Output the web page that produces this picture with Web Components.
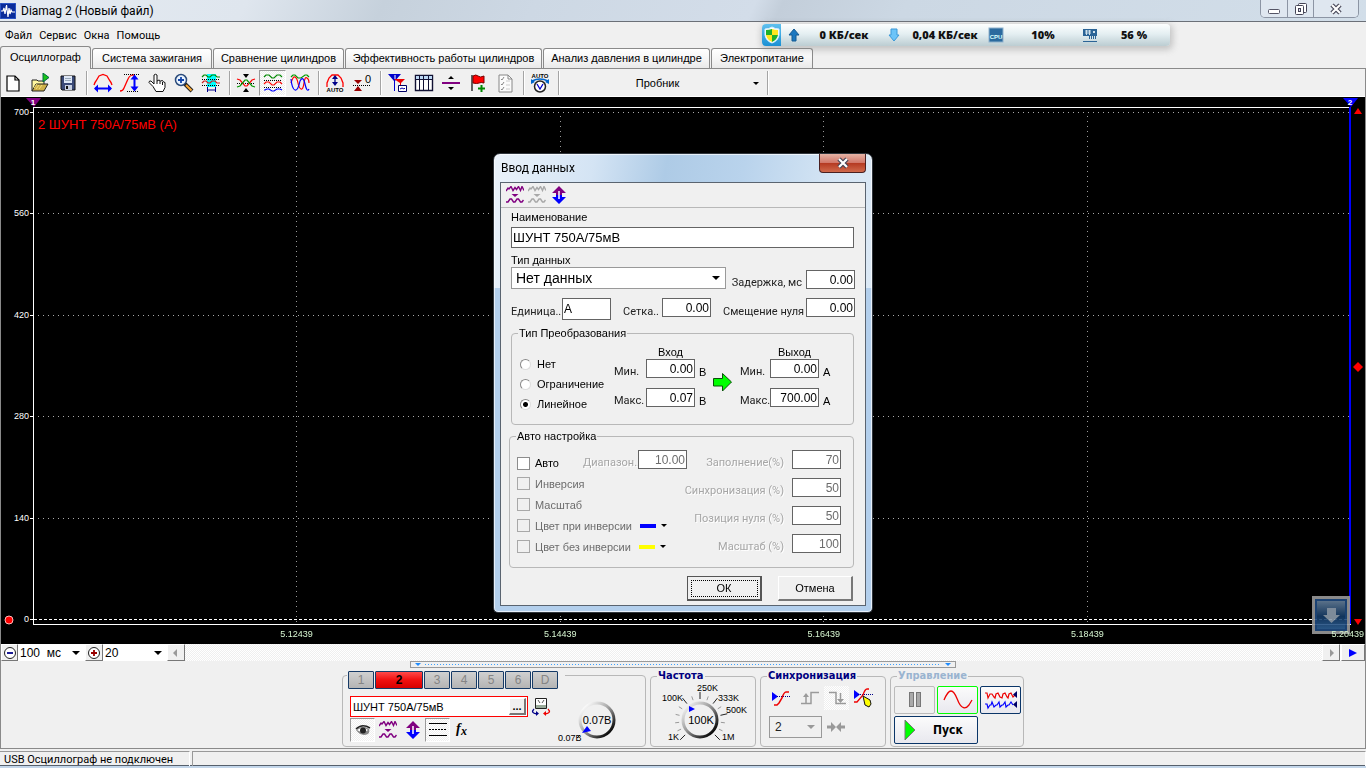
<!DOCTYPE html>
<html lang="ru">
<head>
<meta charset="utf-8">
<title>Diamag 2 (Новый файл)</title>
<style>
:root{--ms:"Liberation Sans",Arial,sans-serif;--tahoma:Roboto,"DejaVu Sans Condensed",sans-serif;--tahoma-bold:"DejaVu Sans Condensed","DejaVu Sans",sans-serif;--segoe:Roboto,"Noto Sans",sans-serif;--segoe-bold:"Noto Sans","Open Sans",sans-serif;--face:#f0f0f0;--line:#b8b8b8;--dark:#646464}
body{margin:0;font:11px/14px var(--ms);color:#000;background:#f0f0f0}
</style>
</head>
<body>
<diamag-app></diamag-app>
<script>
const define = (name, css, html) => customElements.define(name, class extends HTMLElement {
  constructor() { super(); this.attachShadow({ mode: "open" }); }
  connectedCallback() {
    if (this.shadowRoot.childNodes.length) return;
    const t = document.createElement("template");
    t.innerHTML = `<style>*{box-sizing:border-box}[hidden]{display:none}${css}</style>${typeof html === "function" ? html(this) : html}`;
    this.shadowRoot.append(t.content.cloneNode(true));
  }
});

/* ---------- icons ---------- */
const P = (d, stroke, w = 1, extra = "") => `<path d="${d}" fill="none" stroke="${stroke}" stroke-width="${w}" ${extra}/>`;
const F = (d, fill, extra = "") => `<path d="${d}" fill="${fill}" ${extra}/>`;
const dots = 'stroke-dasharray="1 1" shape-rendering="crispEdges"';
const zig = c => P("M1 6l2 -3l1 1l2 -2.500l2 4l2 -3l1.500 2l2 -3l2 4l1.500 -4l2 4", c, 1.4);
const smooth = c => P("M1 17h2l2 -3h1.500l2 3h1.500l2 -3h1.500l2 3h1.500l1.500 -2", c, 1.4);
const waves2 = c => zig(c) + F("M6.500 9h7l-3.500 3z", c) + smooth(c);
const ICONS = {
  app: [16, 16, `<rect width="16" height="16" rx="1" fill="#0a2c9a"/><rect x=".5" y=".5" width="15" height="15" rx="1" fill="none" stroke="#2a55c8"/>` + P("M1 8h2l1 -3l1 6l1.500 -9l1.500 12l1 -9l1 6l1 -4l1 2h3", "#fff", 1.200)],
  new: [20, 20, F("M3 3h8l4 4v11h-12z", "#fff", 'stroke="#000" stroke-width="1.2"') + P("M11 3v4h4", "#000", 1.200)],
  open: [20, 20, F("M1 18v-11h5l1 1h6v3", "#fff7a0", 'stroke="#222"') + F("M1 18l4 -7h12l-4 7z", "#cfb14a", 'stroke="#222"') + F("M12 0l6 4.500l-6 4.500z", "#18c418", 'stroke="#064"') + P("M3 15l3 -4M5 16l3 -4M8 16l3 -4", "#f4e27a")],
  save: [20, 20, F("M3 3h14v14h-13l-1 -1z", "#3a4a78", 'stroke="#111"') + F("M6 3h8v7h-8z", "#dfe8f6") + F("M7 12h7v5h-7z", "#c8d0e0") + F("M8 13h2v3h-2z", "#111") + P("M7 5.500h6M7 7.500h6", "#9ab")],
  archh: [20, 20, P("M1 12q1 -3 2 -4l3 -5l4 -1.500l4 1.500l3 5q1 1 2 4", "red", 1.300) + P("M2 15.500h16", "#00f", 2) + F("M1 15.500l4 -4v8zM19 15.500l-4 -4v8z", "#00f")],
  archv: [20, 20, P("M0 18q3 0 4 -3l4 -9q1 -3 4 -4h2", "red", 1.300) + P("M4 1.500h16M7 18.500h12", "#000", 1, dots) + P("M14.500 4v12", "#00f", 2) + F("M14.500 1.500l4 5h-8zM14.500 18.500l4 -5h-8z", "#00f")],
  hand: [20, 20, F("M7 11v-9q1.500 -1.500 3 0v6l2 -1l1.500 1l2 -.5l1 1.500l1.500 .5v5l-2 4h-7l-3 -5l-4 -4q0 -2 2 -1.500z", "#fff", 'stroke="#111"') + P("M10 8v3M13 8v3M15.500 9v3", "#111")],
  zoom: [20, 20, `<circle cx="7" cy="7" r="5.500" fill="#eaf4ff" stroke="#2a4a7a" stroke-width="1.500"/>` + P("M7 4v6M4 7h6", "#14a", 1.800) + P("M11 11l7 7", "#222", 4) + P("M12 12l5.500 5.500", "#fa3", 2)],
  fit: [20, 20, F("M6 1h9v13h-9z", "#0ff") + P("M1 4l2 -2h2l2 2h2l2 -2h3l2 2h3", "#080", 1.200) + P("M1 10l2 -2h2l2 2h2l2 -2h3l2 2h3", "#c22", 1.200) + P("M1 6.500h18M1 12.500h18", "#000", 1, dots) + P("M6 17h9M6.500 14v5M14.500 14v5", "#008")],
  center: [20, 20, F("M7 1h6l-3 4zM7 19h6l-3 -4z", "#000") + P("M1 10.500h18", "#000", 1, dots) + P("M1 6l3 1l5 6h2l5 -6l3 -1", "red", 1.200) + P("M1 14l3 -1l5 -6h2l5 6l3 1", "#090", 1.200)],
  split3: [20, 20, P("M1 4l2 -2h3l3 3h2l3 -3h3l2 2", "#080", 1.200) + P("M1 11l2 -2h3l3 3h2l3 -3h3l2 2", "red", 1.200) + P("M1 17h1l2 -1h2l3 2h2l3 -2h3l2 1", "#00f", 1.200) + P("M1 7.500h18M1 14.500h18", "#000", 1, dots)],
  overlap: [20, 20, P("M1 4l2 -2h2l3 3h3l4 -3h2l2 2", "#090", 1.200) + P("M1 10q2 -7 4 -6t3 6t3 6q2 1 3 -6t3 -5q2 1 2 5", "red", 1.200) + P("M1 6q1 10 4 11t5 -9q3 -6 5 3t4 5", "#00f", 1.200)],
  autoarch: [20, 20, P("M2 14v-4l2 -5l3 -3h6l3 3l2 5v4", "red", 1.300) + P("M10 5v6", "#008", 1.300) + F("M10 2l3 4h-6zM10 13l3 -4h-6z", "#008") + `<text x="10" y="19" font-size="6" font-weight="700" text-anchor="middle" fill="#000">AUTO</text>`],
  zero: [20, 20, F("M2 7h8l-4 4zM2 18h8l-4 -5z", "#900") + P("M1 12.500h18", "#000", 1, dots) + `<text x="16" y="10" font-size="11" text-anchor="middle" fill="#000">0</text>`],
  trig: [20, 20, F("M1 1h13l-6 7v10h-1v-10z", "#00c") + F("M7 6h11l-4 4v7h-1v-7z", "#e00") + F("M11.500 12.500h8v6h-8z", "#fff", 'stroke="#006"') + P("M13 16l2 -1l2 1l1 -1", "#00a") + P("M8 2v4", "#fff")],
  table: [20, 20, F("M1.500 2.500h17v15h-17z", "#fff", 'stroke="#113" stroke-width="1.400"') + F("M2 3h16v3h-16z", "#bcd8f4") + P("M1 6.500h18M5.500 3v14M9.500 3v14M14.500 3v14", "#113")],
  hsplit: [20, 20, F("M7 6h6l-3 -3zM7 14h6l-3 3z", "#000") + F("M1 9h18v2h-18z", "#800080")],
  flag: [20, 20, P("M4 2v16", "#111", 1.300) + F("M5 3q3 -2 5 0t6 0v7q-3 -1 -5 0t-6 0z", "#f00", 'stroke="#700"') + P("M13.500 12v7M10 15.500h7", "#080", 2)],
  check: [20, 20, F("M4 2h9l4 4v13h-13z", "#fbfbfb", 'stroke="#888"') + P("M13 2v4h4M6 6l1 1l2 -3M6 11l1 1l2 -3M6 16l1 1l2 -3", "#888") + P("M11 8h4M11 12h4M11 16h4", "#ccc")],
  autov: [22, 22, `<text x="11" y="6" font-size="6" font-weight="700" text-anchor="middle" fill="#000">AUTO</text>` + P("M3 9q8 -4 16 0", "#06c", 1.600) + F("M2 7v5l4 -2zM20 7v5l-4 -2z", "#06c") + `<circle cx="11" cy="14.500" r="5.500" fill="#fff" stroke="#222" stroke-width="1.500"/>` + P("M8 12l3 5l3 -5", "#00c", 1.300)],
  waves: [18, 18, `<g transform="translate(-1 -1)">${waves2("#800080")}</g>`],
  wavesgray: [18, 18, `<g transform="translate(-1 -1)">${waves2("#a8a8a8")}</g>`],
  updown: [16, 18, F("M8 0l7 7h-4v2h-6v-2h-4z", "#800080") + F("M8 18l7 -7h-4v-2h-6v2h-4z", "#00f") + P("M8 5v8", "#fff", 1.500)],
  arrow: [22, 22, F("M1.500 7.500h9v-5l9 8.500l-9 9v-5h-9z", "#0f0", 'stroke="#0a500a"')],
  eye: [16, 12, F("M1 6q6 -6 13 -1q1 3 -1 5q-7 3 -12 -4z", "#888") + F("M2 6q6 -4 11 0q-5 4 -11 0z", "#fff") + `<circle cx="8" cy="6.500" r="3" fill="#222"/>` + P("M1 5q6 -6 14 -1", "#222", 1.600)],
  lines: [18, 16, P("M0 1.500h18M0 13.500h18", "#000") + P("M0 7.500h18", "#000", 1, 'stroke-dasharray="2 1"')],
  fx: [16, 16, `<text x="1" y="11" font-family="Liberation Serif" font-style="italic" font-weight="700" font-size="14">f</text><text x="6" y="13" font-family="Liberation Serif" font-style="italic" font-weight="700" font-size="12">x</text>`],
  device: [20, 20, F("M4.500 1.500h11v10h-11z", "#fff", 'stroke="#222"') + F("M5 8h10v3h-10z", "#9a9") + P("M7 3l2 3M13 3l-2 3", "#555") + P("M3 12q-4 4 3 5", "#008", 1.300) + P("M17 12q4 4 -3 5", "#e00", 1.300) + F("M5 14v5l3 -2.500z", "#008") + F("M15 14v5l-3 -2.500z", "#e00")],
  sync: [20, 18, F("M1 3v9l6 -4.500z", "#00f") + P("M6 7.500h13", "#008", 1, dots) + P("M3 16h3l2 -2l3 -5q2 -6 4 -6h3", "#e00", 1.500)],
  rise: [20, 18, P("M1 14.500h10v-11h8", "#9a9a9a", 1.500) + P("M6 7v7", "#9a9a9a", 1.500) + F("M3 8l3 -4l3 4z", "#9a9a9a")],
  fall: [20, 18, P("M2 3.500h7v11h10", "#9a9a9a", 1.500) + P("M13.500 4v8", "#9a9a9a", 1.500) + F("M10 10h7l-3.500 4z", "#9a9a9a")],
  syncpick: [22, 22, F("M1 3v9l6 -4.500z", "#00f") + P("M5 7.500h15", "#008", 1, dots) + P("M1 15h3l6 -7q2 -6 4 -6h2", "#e00", 1.300) + F("M10 9l7 4l1 4l-2 3l-4 -2z", "#ff0", 'stroke="#111"')],
  meet: [20, 14, P("M1 7h5M19 7h-5", "#999", 3) + F("M5 2l5 5l-5 5zM15 2l-5 5l5 5z", "#999")],
  pause: [14, 18, `<rect x="1.500" y="1.500" width="4" height="14" fill="#aaa" stroke="#777"/><rect x="8.500" y="1.500" width="4" height="14" fill="#aaa" stroke="#777"/>`],
  sine: [30, 20, P("M1 10C4 3 6 1 8 1C12 1 14 9 16 13C19 19 23 19 26 15L29 10", "#e00", 1.300)],
  twin: [34, 20, P("M1 3h2l1 5l2 -4h2l2 3l1 1l1 -4l2 -1l2 4l2 1l1 -4l2 -1l2 4l1 1l1 -4l2 -1l2 4l3 -3", "#e00", 1.200) + P("M1 14h2l1 4l2 -3h1l1 -3l2 5l2 -2h1l2 -3l1 5l2 -2h1l2 -3l1 5l2 -2h1l2 -3l2 3", "#00f", 1.200) + F("M33 1v7l-4 -3.500zM33 11v7l-4 -3.500z", "#006")],
  play: [12, 20, F("M1 0l10 10l-10 10z", "#0f0", 'stroke="#777"')],
  minus: [14, 14, `<circle cx="7" cy="7" r="5.500" fill="#fff" stroke="#222"/>` + P("M4 7h6", "#008", 1.800)],
  plus: [14, 14, `<circle cx="7" cy="7" r="5.500" fill="#fff" stroke="#222"/>` + P("M4 7h6M7 4v6", "#900", 1.800)],
  left: [14, 14, F("M8 3v8l-4 -4z", "#999")],
  right: [14, 14, F("M6 3v8l4 -4z", "#999")],
  go: [14, 14, F("M3 3v8l8 -4z", "#00f")],
  shield: [16, 18, F("M8 1q3 2 7 2v6q-1 6 -7 8q-6 -2 -7 -8v-6q4 0 7 -2z", "#fff", 'stroke="#d8f0ff"') + F("M8 3v6h-6v-5q3 0 6 -1zM8 9h6q-1 5 -6 7z", "#1fb02c") + F("M8 3v6h6v-5q-3 0 -6 -1zM8 9h-6q1 5 6 7z", "#ffe61e")],
  up: [12, 14, F("M6 1l5 6h-3v6h-4v-6h-3z", "#1b78c0", 'stroke="#155a92"')],
  down: [12, 16, F("M6 14l5 -6h-2v-6h-6v6h-2z", "#6cc4f8", 'stroke="#3a98d8"')],
  cpu: [16, 16, `<rect x="1" y="1" width="14" height="14" fill="#2b6a9e" stroke="#8fb2cc"/>` + `<text x="8" y="12" font-size="6" font-weight="700" text-anchor="middle" fill="#dff">CPU</text>`],
  ram: [16, 16, F("M1 2h14v7h-14z", "#2b6496") + P("M3 4h6M3 6h6M4.500 3v5M7.500 3v5", "#cfe0ea") + F("M11 4h2v2h-2z", "#cfe0ea") + P("M7.500 9v3M9.500 9v3M11.500 9v3M13.500 9v3M1 14.500h14", "#2b6496")],
  min: [14, 14, `<rect x="1.500" y="7.500" width="11" height="4" rx="1" fill="#fff" stroke="#556"/>`],
  restore: [14, 14, `<rect x="4.500" y="1.500" width="8" height="9" rx="1" fill="#fff" stroke="#445"/><rect x="1.500" y="3.500" width="8" height="9" rx="1" fill="#fff" stroke="#445"/><rect x="4.500" y="6.500" width="2" height="3" fill="#dde" stroke="#445"/>`],
  close: [14, 12, P("M3 2l8 8M11 2l-8 8", "#445", 4.500) + P("M3 2l8 8M11 2l-8 8", "#fff", 2.200)],
};
define("ui-icon", ":host{display:inline-flex;flex:none;font-family:var(--ms)}svg{display:block}", el => {
  const [w, h, body] = ICONS[el.getAttribute("name")];
  return `<svg width="${w}" height="${h}" viewBox="0 0 ${w} ${h}" aria-hidden="true">${body}</svg>`;
});

/* ---------- title bar, menu ---------- */
define("title-bar", `
:host{display:flex;height:22px;flex:none;align-items:center;border-bottom:1px solid #6b7078;padding:0 7px 0 0;background:linear-gradient(115deg,#e4eaf1 0,#dfe6ee 18%,#c6d1dc 28%,#cdd8e4 39%,#d3dde9 55%,#c3ceda 57%,#ccd8e4 66%,#d2dee9 100%)}
h1{flex:1;margin:0 0 0 5px;font:12px/20px var(--segoe)}
.c{display:flex;align-self:flex-start;height:18px;border:1px solid #8c95a4;border-top:0;border-radius:0 0 5px 5px;overflow:hidden}
button{border:0;border-left:1px solid #8c95a4;background:#dfe7f0;padding:0;width:26px;display:grid;place-items:center}
button:first-child{border-left:0}button:last-child{width:45px}`, `
<ui-icon name="app"></ui-icon><h1>Diamag 2 (Новый файл)</h1>
<div class="c"><button aria-label="Свернуть"><ui-icon name="min"></ui-icon></button><button aria-label="Восстановить"><ui-icon name="restore"></ui-icon></button><button aria-label="Закрыть"><ui-icon name="close"></ui-icon></button></div>`);

define("menu-bar", `
:host{display:flex;height:25px;flex:none;align-items:center;padding:2px 5px 0;gap:7px;background:var(--face)}
a{color:#000;text-decoration:none;font:11px/16px var(--segoe)}`, `
<a href="#file">Файл</a><a href="#service">Сервис</a><a href="#windows">Окна</a><a href="#help">Помощь</a>`);

define("net-monitor", `
:host{position:absolute;top:24px;right:196px;width:408px;height:22px;display:flex;align-items:center;border-radius:4px;background:linear-gradient(#fdfefe,#e4eff2 45%,#bccdd2);box-shadow:1px 2px 6px 2px #8886;font:bold 11px/14px var(--segoe-bold);color:#111}
.s{width:19px;height:22px;display:grid;place-items:center;border-radius:4px 0 0 4px;background:linear-gradient(#5fc0ee,#1a90d4)}
.i{width:26px;display:grid;place-items:center}b{text-align:center}`, `
<span class="s"><ui-icon name="shield"></ui-icon></span><span class="i"><ui-icon name="up"></ui-icon></span><b style="width:74px">0 КБ/сек</b><span class="i"><ui-icon name="down"></ui-icon></span><b style="width:76px">0,04 КБ/сек</b><span class="i"><ui-icon name="cpu"></ui-icon></span><b style="width:68px">10%</b><span class="i"><ui-icon name="ram"></ui-icon></span><b style="width:62px">56 %</b>`);

/* ---------- tabs, toolbar ---------- */
define("mode-tabs", `
:host{display:flex;height:22px;flex:none;align-items:flex-end;gap:1px;border-bottom:1px solid #8a8a8a}
button{height:20px;padding:0 0 1px;border:1px solid #8a8a8a;border-bottom:0;border-radius:3px 3px 0 0;background:linear-gradient(#fff,#f4f4f4 60%,#e9e9e9);font:11px/14px var(--ms);color:#000;white-space:nowrap}
button[aria-selected=true]{height:23px;margin-bottom:-1px;background:var(--face);padding-bottom:3px}`, () =>
  [["Осциллограф", 91], ["Система зажигания", 120], ["Сравнение цилиндров", 131], ["Эффективность работы цилиндров", 197], ["Анализ давления в цилиндре", 167], ["Электропитание", 102]]
    .map(([t, w], i) => `<button role="tab" aria-selected="${!i}" style="width:${w}px">${t}</button>`).join(""));

define("tool-bar", `
:host{display:flex;height:28px;flex:none;align-items:center;background:var(--face);border-bottom:1px solid #fff}
button{width:27px;height:26px;border:0;padding:0;background:none;display:grid;place-items:center}
button:first-of-type{width:26px}
button.on{background:repeating-conic-gradient(#fff 0 25%,#ececec 0 50%) 0 0/2px 2px;border:1px solid #999;border-right-color:#fff;border-bottom-color:#fff}
i{width:8px;height:24px;background:linear-gradient(90deg,#a4a4a4 50%,#fff 50%) 5px 0/2px 100% no-repeat}
.d{width:201px;position:relative;display:flex;align-items:center}
select{appearance:none;width:100%;border:0;background:none;font:11px/14px var(--ms);color:#000;text-align:center;text-align-last:center;padding:0 8px 0 0}
.d::after{content:"";position:absolute;right:3px;top:6px;border:3px solid transparent;border-top-color:#000;border-bottom:0}`, () =>
  [["new open save"], ["archh archv hand zoom fit"], ["center split3 overlap"], ["autoarch zero"], ["trig table hsplit flag check"], ["autov"]]
    .map(([g]) => g.split(" ").map(n => `<button class="${n === "split3" ? "on" : ""}" aria-label="${n}"><ui-icon name="${n}"></ui-icon></button>`).join("") + "<i></i>").join("") +
  `<div class="d"><select aria-label="Датчик"><option>Пробник</option></select></div><i></i>`);

/* ---------- oscilloscope ---------- */
define("scope-view", `
:host{flex:1;min-height:0;display:grid;grid-template:10px 1fr 19px/32px 1fr 14px;background:#000;position:relative;color:#fff;font:9px/10px var(--ms);overflow:hidden}
.y{grid-area:2/1;padding:5px 0;display:flex;flex-direction:column;justify-content:space-between;align-items:flex-end}
.y span{height:1px;line-height:1px;display:flex;align-items:center;gap:1px}
.y span::after{content:"";width:3px;height:1px;background:#fff}
.p{grid-area:2/2;border:1px solid #fff;border-width:1px 0 1px 1px;position:relative;padding:4px 0;display:flex;flex-direction:column;justify-content:space-between}
.p hr{margin:0;border:0;width:100%;height:1px;background:repeating-linear-gradient(90deg,transparent 0 4px,#aaa 4px 5px)}
.p hr:last-of-type{background:repeating-linear-gradient(90deg,#fff 0 3px,transparent 3px 5px)}
.v{position:absolute;inset:4px 0 0;display:grid;grid-template-columns:repeat(5,1fr)}
.v i{background:repeating-linear-gradient(transparent 0 4px,#999 4px 5px) 100% 0/1px 100% no-repeat}
.v i:last-child{margin-top:-5px;background:linear-gradient(#00f,#00f) 100% 0/2px 100% no-repeat}
.n{position:absolute;left:4px;top:9px;color:#f00;font:13px/15px var(--ms)}
.x{grid-area:3/2;display:flex;justify-content:space-between;padding-top:4px;color:#d6f5d0;position:relative;z-index:1;pointer-events:none}
.x span{width:0;display:flex;justify-content:center}
.x .e{justify-content:flex-end}.e b{font-weight:400;margin-right:-13px}
svg{display:block}
.m1{grid-area:1/1/2/3;justify-self:start;margin-left:25px;align-self:end}.m2{grid-area:1/2/2/4;justify-self:end;margin-right:7px;align-self:end}
.r{grid-area:2/3;display:flex;flex-direction:column;justify-content:space-between;align-items:center}
.z{grid-area:2/1;align-self:end;margin-left:3px}
.g{position:absolute;right:15px;bottom:10px;width:38px;height:38px;border:3px solid #999;padding:0;background:linear-gradient(#6f879f,#143a66 55%,#33669b);outline:2px solid #1f4a80;outline-offset:-5px;display:grid;place-items:center;opacity:.9}`, `
<svg class="m1" width="15" height="9"><path d="M0 0h15l-7 9z" fill="#800080"/><text x="7" y="7" font-size="8" font-weight="700" text-anchor="middle" fill="#fff">1</text></svg>
<svg class="m2" width="15" height="9"><path d="M0 0h15l-7 9z" fill="#00f"/><text x="7" y="7" font-size="8" font-weight="700" text-anchor="middle" fill="#fff">2</text></svg>
<div class="y"><span>700</span><span>560</span><span>420</span><span>280</span><span>140</span><span>0</span></div>
<svg class="z" width="10" height="10"><circle cx="5" cy="5" r="4" fill="red" stroke="#fbb"/></svg>
<div class="p"><div class="v"><i></i><i></i><i></i><i></i><i></i></div><hr><hr><hr><hr><hr><hr><div class="n">2 ШУНТ 750А/75мВ (А)</div></div>
<div class="r"><svg width="8" height="8"><path d="M4 1l4 6h-8z" fill="red"/></svg><svg width="10" height="10"><path d="M5 0l5 5l-5 5l-5 -5z" fill="red"/></svg><svg width="8" height="7"><path d="M0 1h8l-4 6z" fill="red"/></svg></div>
<div class="x"><span></span><span>5.12439</span><span>5.14439</span><span>5.16439</span><span>5.18439</span><span class="e"><b>5.20439</b></span></div>
<button class="g" aria-label="Загрузка"><svg width="18" height="18"><path d="M5 2h9v7h4l-8.500 8l-8.500 -8h4z" fill="#8b9bab"/></svg></button>`);

define("time-bar", `
:host{display:flex;height:17px;flex:none;background:#fff}
button{width:18px;border:1px solid #fff;border-right-color:#777;border-bottom-color:#777;background:var(--face);padding:0;display:grid;place-items:center}
.s{position:relative;display:flex;background:#fff}
select{appearance:none;border:0;background:none;font:12px/16px var(--ms);color:#000;padding:0 2px;width:100%}
.s::after{content:"";position:absolute;right:5px;top:7px;border:4px solid transparent;border-top-color:#000;border-bottom:0}
.t{flex:1;background:repeating-conic-gradient(#fff 0 25%,#efefef 0 50%) 0 0/2px 2px}
.f{width:17px}.go{width:24px;margin-left:1px}`, `
<button class="f" aria-label="Сжать"><ui-icon name="minus"></ui-icon></button><div class="s" style="width:67px"><select aria-label="Развёртка"><option>100&nbsp; мс</option></select></div>
<button aria-label="Растянуть"><ui-icon name="plus"></ui-icon></button><div class="s" style="width:64px"><select aria-label="Кадры"><option>20</option></select></div>
<button aria-label="Влево"><ui-icon name="left"></ui-icon></button><div class="t"></div><button aria-label="Вправо"><ui-icon name="right"></ui-icon></button><button class="go" aria-label="Воспроизвести"><ui-icon name="go"></ui-icon></button>`);

define("split-grip", `
:host{display:flex;align-items:center;gap:4px;width:546px;height:7px;flex:none;align-self:center;border:1px solid #999;padding:0 4px;background:var(--face)}
i{border:3px solid transparent;border-top-color:#1e8cff;border-bottom:0}
b{flex:1;height:1px;background:repeating-linear-gradient(90deg,#3aa0ff 0 1px,transparent 1px 3px)}`, `<i></i><b></b><i></i>`);

/* ---------- group box ---------- */
define("group-box", `
:host{display:block}
fieldset{margin:0;padding:0;min-width:0;border:1px solid var(--line);border-radius:4px;height:100%}
legend{margin-left:6px;padding:0 1px;font:var(--lf,11px/10px var(--ms));color:var(--lc,#000)}`, el =>
  `<fieldset><legend>${el.getAttribute("label")}</legend><slot></slot></fieldset>`);

/* ---------- lower control panel ---------- */
define("channel-panel", `
:host{display:block;width:304px;height:72px;border:1px solid var(--line);border-radius:4px}
.t{display:flex;width:fit-content;gap:1px;margin:-5px 0 0 4px;padding:0 7px 0 1px;background:var(--face)}
.t button{width:26px;height:18px;padding:0;border:1px solid #163a66;border-radius:1px;background:linear-gradient(#d0d0d0,#b4b4b4);color:#858585;font:12px/14px var(--ms)}
.t .on{width:48px;background:linear-gradient(#ff4a4a,#f01010 50%,#d80000);color:#000;font-weight:700}
.b{display:flex;justify-content:space-between}
.l{padding:7px 0 0 7px}
.f{display:flex;align-items:center;gap:3px}
.in{display:flex;width:178px;height:21px;border:1px solid #f00;background:#fff;padding:1px}
input{flex:1;min-width:0;border:0;padding:0 1px;font:11px/16px var(--ms);background:none;color:#000}
.in button{width:17px;padding:0;border:1px solid #fff;border-right:2px solid #777;border-bottom:2px solid #777;background:var(--face);font:bold 11px/8px var(--ms)}
.i{display:flex;margin-top:1px}
.i button{width:25px;height:24px;padding:0;border:0;background:none;display:grid;place-items:center}
.i .on{border:1px solid #999;border-right-color:#fff;border-bottom-color:#fff;background:repeating-conic-gradient(#fff 0 25%,#efefef 0 50%) 0 0/2px 2px}
text{font-family:var(--ms)}`, `
<div class="t"><button>1</button><button class="on">2</button><button>3</button><button>4</button><button>5</button><button>6</button><button>D</button></div>
<div class="b"><div class="l">
<div class="f"><span class="in"><input aria-label="Канал" value="ШУНТ 750А/75мВ"><button aria-label="Изменить">...</button></span><ui-icon name="device"></ui-icon></div>
<div class="i"><button class="on" aria-label="Видимость"><ui-icon name="eye"></ui-icon></button><button aria-label="Сигнал"><ui-icon name="waves"></ui-icon></button><button aria-label="Сдвиг"><ui-icon name="updown"></ui-icon></button><button class="on" aria-label="Линии"><ui-icon name="lines"></ui-icon></button><button aria-label="Функция"><ui-icon name="fx"></ui-icon></button></div></div>
<svg width="91" height="56" viewBox="554 689 91 56" role="img" aria-label="Чувствительность"><defs><linearGradient id="k" x1="0" y1="0" x2="1" y2="1"><stop offset=".1" stop-color="#fff"/><stop offset=".45" stop-color="#aaa"/><stop offset=".9" stop-color="#000"/></linearGradient></defs>
<circle cx="597" cy="720" r="17" fill="#f0f0f0" stroke="url(#k)" stroke-width="3"/><path d="M582 733l5 -7l4 5z" fill="#00f"/><path d="M580 735l-3 3" stroke="#222"/><text x="597" y="724" font-size="11" text-anchor="middle">0.07В</text><text x="558" y="741" font-size="9">0.07В</text></svg></div>`);

define("frequency-panel", `
:host{display:block;width:106px}svg{display:block}text{font-family:var(--ms);font-size:9px}group-box{height:76px;--lf:bold 11px/10px var(--tahoma-bold);--lc:#000080}`, () => {
  let ticks = "";
  for (let i = 0; i <= 14; i++) {
    const a = (225 - i * 270 / 14) * Math.PI / 180, big = [0, 5, 7, 9, 11, 14].includes(i), r = big ? 28 : 25;
    ticks += `<path d="M${700 + 21 * Math.cos(a)} ${720 - 21 * Math.sin(a)}L${700 + r * Math.cos(a)} ${720 - r * Math.sin(a)}" stroke="${big ? "#222" : "#999"}"/>`;
  }
  return `<group-box label="Частота"><svg width="104" height="64" viewBox="651 681 104 64" role="img" aria-label="100K"><defs><linearGradient id="k" x1="0" y1="0" x2="1" y2="1"><stop offset=".1" stop-color="#eee"/><stop offset=".45" stop-color="#999"/><stop offset=".9" stop-color="#000"/></linearGradient></defs>${ticks}<circle cx="700" cy="720" r="17" fill="#f0f0f0" stroke="url(#k)" stroke-width="3"/><path d="M689 706v6l6 -3z" fill="#00f"/><text x="701" y="724" text-anchor="middle" style="font-size:11px">100K</text><text x="697" y="691">250K</text><text x="662" y="701">100K</text><text x="718" y="701">333K</text><text x="726" y="713">500K</text><text x="668" y="740">1K</text><text x="722" y="740">1M</text></svg></group-box>`;
});

define("sync-panel", `
:host{display:block;width:126px}group-box{height:76px;--lf:bold 11px/10px var(--tahoma-bold);--lc:#000080}
.r{display:flex;align-items:center;height:29px;padding:4px 7px 0 8px}
button{border:0;padding:0;background:none;width:28px;height:24px;display:grid;place-items:center}
.a{justify-content:space-between;padding-left:6px}
.on{width:25px;background:repeating-conic-gradient(#fff 0 25%,#efefef 0 50%) 0 0/2px 2px}
.s{width:53px;height:22px;position:relative;border:1px solid #999;display:flex}
select{appearance:none;width:100%;border:0;background:none;padding:0 5px;font:12px/18px var(--ms);color:#222;opacity:1}
.s::after{content:"";position:absolute;right:6px;top:8px;border:4px solid transparent;border-top-color:#999;border-bottom:0}`, `
<group-box label="Синхронизация"><div class="r a"><button aria-label="По уровню"><ui-icon name="sync"></ui-icon></button><button aria-label="Фронт"><ui-icon name="rise"></ui-icon></button><button class="on" aria-label="Спад"><ui-icon name="fall"></ui-icon></button><button aria-label="Выбор уровня"><ui-icon name="syncpick"></ui-icon></button></div>
<div class="r"><span class="s"><select aria-label="Канал синхронизации" disabled><option>2</option></select></span><button aria-label="Центр"><ui-icon name="meet"></ui-icon></button></div></group-box>`);

define("run-panel", `
:host{display:block;width:134px}group-box{height:76px;--lf:bold 11px/10px var(--tahoma-bold);--lc:#9ab4d0}
.g{display:grid;grid-template-columns:repeat(3,41px);grid-auto-rows:28px;gap:2px;padding:5px 0 0 3px}
button{border:1px solid #0a3568;border-radius:2px;padding:0;min-height:0;background:linear-gradient(#fbfbfb,#e8e8ee);display:flex;align-items:center;justify-content:center;font:bold 12px/14px var(--tahoma-bold);color:#000}
.off{border-color:#bbb;background:#f0f0f0}.green{border-color:#0f0}
.w{grid-column:span 2;justify-content:flex-start;padding-left:9px;gap:17px}`, `
<group-box label="Управление"><div class="g"><button class="off" disabled aria-label="Пауза"><ui-icon name="pause"></ui-icon></button><button class="green" aria-label="Синус"><ui-icon name="sine"></ui-icon></button><button aria-label="Сигналы"><ui-icon name="twin"></ui-icon></button><button class="w"><ui-icon name="play"></ui-icon>Пуск</button></div></group-box>`);

define("status-bar", `
:host{display:flex;gap:2px;height:19px;flex:none;padding-top:2px;border-bottom:2px solid #c3d6ea;background:linear-gradient(#56606c,#56606c) 0 100%/100% 1px no-repeat,var(--face);font:11px/15px var(--tahoma)}
span{border:1px solid #999;border-left:0;border-right-color:#fff;border-bottom:0;width:190px;padding:0 4px;white-space:nowrap}
span+span{flex:1;border-left:1px solid #999}`, `<span>USB Осциллограф не подключен</span><span></span>`);

/* ---------- data entry dialog ---------- */
define("data-dialog", `
:host{position:fixed;inset:0;display:grid;place-items:center;pointer-events:none;padding-bottom:2px}
section{pointer-events:auto;width:380px;border:1px solid #30363d;border-radius:7px 7px 5px 5px;padding:0 6px 6px;background:linear-gradient(#0000 134px,#b3cfec 134px),linear-gradient(100deg,#eaf2fa 0,#d4e4f4 22%,#aecbe6 38%,#b9d3ec 55%,#d5e5f4 75%,#e3edf7 100%);box-shadow:inset 0 0 0 1px #fffa}
header{display:flex;justify-content:space-between;height:28px}
h2{margin:0;padding-left:1px;font:12px/28px var(--segoe)}
.x{width:47px;height:19px;border:1px solid #4a2020;border-top:0;border-radius:0 0 4px 4px;background:linear-gradient(#e6b4a6,#d2786a 48%,#b53a22 52%,#d06a4c);padding:0;display:grid;place-items:center}
form{display:block;background:var(--face);border:1px solid #5a6470}
.tb{display:flex;gap:4px;align-items:center;height:25px;padding-left:5px;border-bottom:1px solid var(--line)}
.tb button{border:0;padding:0;background:none;width:18px;display:grid;place-items:center}
.c{padding:0 11px 4px 10px}
.lb{display:block;height:19px;line-height:19px}.l2{padding-top:3px}
input:not([type]){height:19px;width:49px;border:1px solid var(--dark);background:#fff;padding:0 1px;font:12px/15px var(--ms);color:#000;text-align:right}
input:disabled{color:#6c6c6c!important}
input.n{display:block;width:100%!important;height:21px!important;text-align:left!important;font-size:13px!important}
.row{display:grid;grid-template-columns:51px 49px 51px 49px 95px 49px;align-items:start}
.row input.u{height:22px;text-align:left}
.row label,.t{font:11px/12px var(--tahoma);color:#222;white-space:nowrap}
.row label{padding-top:8px}
.r1{display:grid;grid-template-columns:215px 1fr 49px;align-items:end;margin:0 -1px 9px 0}
.r1 label{text-align:right;padding-right:4px}
.sel{position:relative;height:22px;border:1px solid #999;background:#fff;display:flex}
select{appearance:none;width:100%;border:0;background:none;padding:0 4px;font:14px/20px var(--ms);color:#000}
.sel::after{content:"";position:absolute;right:5px;top:8px;border:4px solid transparent;border-top-color:#000;border-bottom:0}
.g1{height:97px;margin-top:8px}
.i1{display:grid;grid-template-columns:94px 32px 49px 18px 27px 30px 49px 20px;grid-template-rows:14px 19px 29px;padding:7px 0 0 8px}
.rad{grid-area:1/1/5/2;padding-top:9px}
.rad label,.chk{display:flex;align-items:center;height:20px;gap:6px;white-space:nowrap}
input[type=radio]{appearance:none;width:11px;height:11px;margin:0;border:1px solid #888;border-right-color:#ddd;border-bottom-color:#ddd;border-radius:50%;background:#fff}
input[type=radio]:checked{background:radial-gradient(#000 0 2px,#fff 3px)}
input[type=checkbox]{appearance:none;width:13px;height:13px;margin:0;border:1px solid #8c8c8c;background:#fff}
input[type=checkbox]:disabled{background:#f0f0f0;border-color:#a8a8a8}
.h{text-align:center}
.i1 .t,.i1 .un{align-self:end}.i1 .un{padding-left:4px;line-height:12px}
.k2{margin-top:10px}
.ar{grid-area:2/5/5/6;align-self:start;padding-top:12px;margin-left:-1px}
.g2{height:137px;margin:6px 0 0 -2px}
.i2{display:grid;grid-template-columns:1fr auto;padding:9px 12px 0 7px}
.q{display:flex;align-items:flex-start;height:23px}
.q>*{flex:none}
.q .chk{width:66px;padding-top:5px}
.q .t{width:55px;padding-top:7px}
.chk{height:21px;gap:5px;color:#6c6c6c}.chk.act{color:#000}
.g{color:#a6a6a6!important;text-shadow:1px 1px #fff}
.w{display:grid;grid-template-columns:103px 49px;column-gap:8px;row-gap:9px;justify-items:end;align-items:end;align-content:start}
.sw{display:flex;align-items:center;gap:5px;margin-left:3px;border:0;background:none;padding:0}
.sw b{width:16px;height:4px;background:var(--c)}.sw i{border:3px solid transparent;border-top-color:#000;border-bottom:0}
.i2>div:first-child{width:0;min-width:100%}
footer{display:flex;justify-content:flex-end;gap:16px;margin:8px 1px 0 0}
footer button{width:75px;height:25px;padding:0;border:1px solid #fff;border-right:2px solid #777;border-bottom:2px solid #777;background:var(--face);font:11px/14px var(--ms);color:#000}
footer .ok{border:1px solid #555;border-right:2px solid #555;border-bottom:2px solid #555;outline:1px dotted #000;outline-offset:-5px}`, `
<section role="dialog" aria-labelledby="tt"><header><h2 id="tt">Ввод данных</h2><button class="x" aria-label="Закрыть"><ui-icon name="close"></ui-icon></button></header>
<form>
<div class="tb"><button type="button" aria-label="Сигнал"><ui-icon name="waves"></ui-icon></button><button type="button" aria-label="Сигнал отключён"><ui-icon name="wavesgray"></ui-icon></button><button type="button" aria-label="Сдвиг"><ui-icon name="updown"></ui-icon></button></div>
<div class="c">
<label class="lb" for="nm">Наименование</label><input class="n" id="nm" value="ШУНТ 750А/75мВ">
<label class="lb l2" for="ty">Тип данных</label>
<div class="r1"><span class="sel"><select id="ty"><option>Нет данных</option></select></span><label class="t" for="dl">Задержка, мс</label><input id="dl" value="0.00"></div>
<div class="row"><label for="un">Единица..</label><input class="u" id="un" value="А"><label for="gr" style="padding-left:12px">Сетка..</label><input id="gr" value="0.00"><label for="of" style="padding-left:12px">Смещение нуля</label><input id="of" value="0.00"></div>
<group-box class="g1" label="Тип Преобразования"><div class="i1">
<div class="rad"><label><input type="radio" name="m">Нет</label><label><input type="radio" name="m">Ограничение</label><label><input type="radio" name="m" checked>Линейное</label></div>
<span class="h" style="grid-area:1/3">Вход</span><span class="h" style="grid-area:1/7">Выход</span>
<label class="t" for="a" style="grid-area:2/2">Мин.</label><input id="a" value="0.00" style="grid-area:2/3"><span class="un" style="grid-area:2/4">В</span>
<label class="t" for="b" style="grid-area:2/6">Мин.</label><input id="b" value="0.00" style="grid-area:2/7"><span class="un" style="grid-area:2/8">А</span>
<label class="t" for="d" style="grid-area:3/2">Макс.</label><input class="k2" id="d" value="0.07" style="grid-area:3/3"><span class="un" style="grid-area:3/4">В</span>
<label class="t" for="e" style="grid-area:3/6">Макс.</label><input class="k2" id="e" value="700.00" style="grid-area:3/7"><span class="un" style="grid-area:3/8">А</span>
<ui-icon class="ar" name="arrow"></ui-icon></div></group-box>
<group-box class="g2" label="Авто настройка"><div class="i2"><div>
<div class="q"><label class="chk act"><input type="checkbox">Авто</label><label class="t g" for="rg">Диапазон..</label><input id="rg" disabled value="10.00"></div>
<label class="chk"><input type="checkbox" disabled>Инверсия</label><label class="chk"><input type="checkbox" disabled>Масштаб</label>
<div class="chk"><label class="chk"><input type="checkbox" disabled>Цвет при инверсии</label><button type="button" class="sw" style="--c:#00f" aria-label="Синий"><b></b><i></i></button></div>
<div class="chk"><label class="chk"><input type="checkbox" disabled>Цвет без инверсии</label><button type="button" class="sw" style="--c:#ff0" aria-label="Жёлтый"><b></b><i></i></button></div></div>
<div class="w"><label class="t g" for="w1">Заполнение(%)</label><input id="w1" disabled value="70"><label class="t g" for="w2">Синхронизация (%)</label><input id="w2" disabled value="50"><label class="t g" for="w3">Позиция нуля (%)</label><input id="w3" disabled value="50"><label class="t g" for="w4">Масштаб (%)</label><input id="w4" disabled value="100"></div></div></group-box>
<footer><button type="button" class="ok">ОК</button><button type="button">Отмена</button></footer>
</div></form></section>`);

define("diamag-app", `
:host{display:flex;flex-direction:column;height:100vh;min-height:560px;position:relative}
main{flex:1;min-height:0;display:flex;flex-direction:column;border:1px solid #8a8a8a;border-top:0}
.p{display:flex;justify-content:center;align-items:flex-end;gap:4px;flex:none;height:80px;padding-bottom:1px}`, `
<title-bar></title-bar><menu-bar></menu-bar><net-monitor></net-monitor>
<mode-tabs></mode-tabs>
<main><tool-bar></tool-bar><scope-view></scope-view><time-bar></time-bar><split-grip></split-grip>
<div class="p"><channel-panel></channel-panel><frequency-panel></frequency-panel><sync-panel></sync-panel><run-panel></run-panel></div></main>
<status-bar></status-bar><data-dialog></data-dialog>`);
</script>
</body>
</html>
